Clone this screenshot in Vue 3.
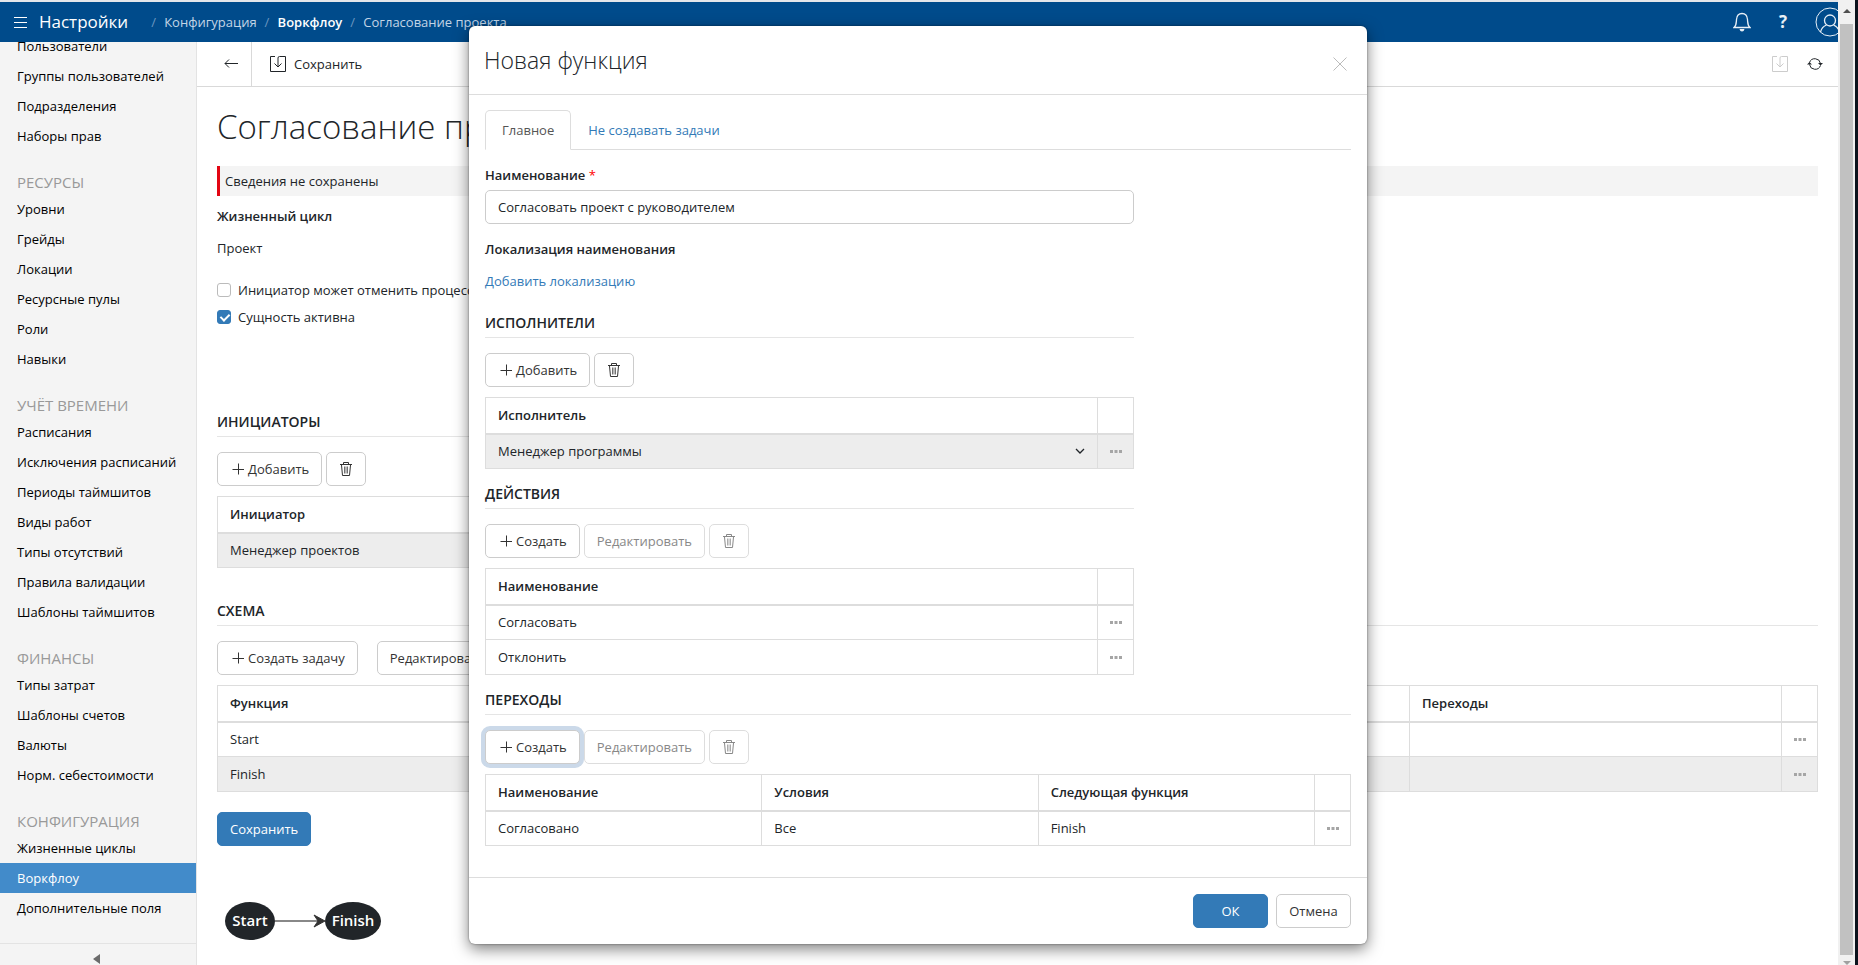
<script setup>
import { ref } from 'vue'

const groups = [
  { title: '', items: ['Пользователи', 'Группы пользователей', 'Подразделения', 'Наборы прав'] },
  { title: 'РЕСУРСЫ', items: ['Уровни', 'Грейды', 'Локации', 'Ресурсные пулы', 'Роли', 'Навыки'] },
  { title: 'УЧЁТ ВРЕМЕНИ', items: ['Расписания', 'Исключения расписаний', 'Периоды таймшитов', 'Виды работ', 'Типы отсутствий', 'Правила валидации', 'Шаблоны таймшитов'] },
  { title: 'ФИНАНСЫ', items: ['Типы затрат', 'Шаблоны счетов', 'Валюты', 'Норм. себестоимости'] },
  { title: 'КОНФИГУРАЦИЯ', items: ['Жизненные циклы', 'Воркфлоу', 'Дополнительные поля'] },
]
const active = 'Воркфлоу'
const name = ref('Согласовать проект с руководителем')
const canCancel = ref(false)
const isActive = ref(true)
const performer = ref('Менеджер программы')
const actions = ['Согласовать', 'Отклонить']
</script>

<template>
  <div class="screen">
    <svg class="defs" aria-hidden="true">
      <symbol id="i-plus" viewBox="0 0 12 12"><path d="M6.500 0.500V11.500M0.500 6.500H12" fill="none" stroke="currentColor" /></symbol>
      <symbol id="i-trash" viewBox="0 0 14 16">
        <path d="M1 3.500H13M4.500 3V1.500H9.500V3M2.500 4L3.500 14.500H10.500L11.500 4" fill="none" stroke="currentColor" />
        <path d="M5.500 5.500V12.500M7 5.500V12.500M8.500 5.500V12.500" fill="none" stroke="currentColor" stroke-width="0.700" />
      </symbol>
      <symbol id="i-save" viewBox="0 0 16 16">
        <path d="M5 0.500H0.500V15.500H15.500V0.500H9.500Q8 0.500 8 2V11M4.500 7.500L8 11L11.500 7.500" fill="none" stroke="currentColor" />
      </symbol>
      <symbol id="i-dots" viewBox="0 0 12 3"><path d="M0 0h3v3H0zM4.500 0h3v3h-3zM9 0h3v3H9z" fill="currentColor" /></symbol>
    </svg>

    <div class="app">
      <header class="topbar">
        <button class="icon-btn burger" aria-label="Меню">
          <svg width="13" height="11" viewBox="0 0 13 11"><path d="M0 0.500H13M0 5.500H13M0 10.500H13" stroke="currentColor" /></svg>
        </button>
        <span class="brand">Настройки</span>
        <nav class="crumbs">
          <i>/</i><a href="#">Конфигурация</a><i>/</i><a href="#" class="strong">Воркфлоу</a><i>/</i><a href="#">Согласование проекта</a>
        </nav>
        <div class="top-actions">
          <button class="icon-btn" aria-label="Уведомления">
            <svg width="18" height="20" viewBox="0 0 18 20">
              <path d="M1 15.500H17C14.500 13.500 14.800 11.500 14.500 7.500C14.200 3.500 12 1.500 9 1.500S3.800 3.500 3.500 7.500C3.200 11.500 3.500 13.500 1 15.500Z" fill="none" stroke="currentColor" stroke-width="1.300" />
              <path d="M6.500 17H11.500Q11 19.500 9 19.500T6.500 17Z" fill="currentColor" />
            </svg>
          </button>
          <button class="icon-btn help" aria-label="Справка">?</button>
          <button class="icon-btn user" aria-label="Профиль">
            <svg width="30" height="30" viewBox="0 0 30 30" fill="none" stroke="currentColor">
              <circle cx="15" cy="15" r="14" stroke-width="1" />
              <circle cx="15" cy="13.500" r="5.500" stroke-width="1.300" />
              <path d="M5.500 25C6.500 21 9 19 11.500 18M24.500 25C23.500 21 21 19 18.500 18" stroke-width="1.300" />
            </svg>
          </button>
        </div>
      </header>

      <div class="body">
        <aside class="sidebar">
          <nav class="menu">
            <div v-for="(g, gi) in groups" :key="gi" class="group">
              <h6 v-if="g.title">{{ g.title }}</h6>
              <a v-for="it in g.items" :key="it" href="#" :class="{ active: it === active }">{{ it }}</a>
            </div>
          </nav>
          <button class="collapse" aria-label="Свернуть меню">
            <svg width="7" height="10" viewBox="0 0 7 10"><path d="M7 0V10L0 5Z" fill="currentColor" /></svg>
          </button>
        </aside>

        <main class="main">
          <div class="toolbar">
            <button class="icon-btn back" aria-label="Назад">
              <svg width="14" height="10" viewBox="0 0 14 10"><path d="M14 4.500H1M5 0.500L1 4.500L5 8.500" fill="none" stroke="currentColor" /></svg>
            </button>
            <button class="icon-btn save"><svg width="16" height="16"><use href="#i-save" /></svg>Сохранить</button>
            <div class="tool-right">
              <button class="icon-btn" disabled aria-label="Сохранить"><svg width="16" height="16"><use href="#i-save" /></svg></button>
              <button class="icon-btn" aria-label="Обновить">
                <svg width="16" height="14" viewBox="0 0 16 14">
                  <path d="M2.500 5.500A5.700 5.700 0 0 1 13.500 6.500M13.500 8.500A5.700 5.700 0 0 1 2.500 7.500" fill="none" stroke="currentColor" />
                  <path d="M0 7.500L2.500 5L5 7.500ZM11 6L13.500 8.500L16 6Z" fill="currentColor" />
                </svg>
              </button>
            </div>
          </div>

          <div class="content">
            <h1>Согласование проекта</h1>
            <div class="notice">Сведения не сохранены</div>
            <div class="label">Жизненный цикл</div>
            <div class="value">Проект</div>
            <div class="checks">
              <label><input v-model="canCancel" type="checkbox" />Инициатор может отменить процесс</label>
              <label><input v-model="isActive" type="checkbox" />Сущность активна</label>
            </div>

            <section class="initiators">
              <h2>ИНИЦИАТОРЫ</h2>
              <div class="buttons">
                <button class="btn"><svg class="plus"><use href="#i-plus" /></svg>Добавить</button>
                <button class="btn square" aria-label="Удалить"><svg class="trash"><use href="#i-trash" /></svg></button>
              </div>
              <table>
                <thead><tr><th>Инициатор</th><th class="menu-col"></th></tr></thead>
                <tbody><tr class="sel"><td>Менеджер проектов</td><td class="menu-col"><button class="icon-btn dots" aria-label="Действия"><svg><use href="#i-dots" /></svg></button></td></tr></tbody>
              </table>
            </section>

            <section class="schema">
              <h2>СХЕМА</h2>
              <div class="buttons wide">
                <button class="btn"><svg class="plus"><use href="#i-plus" /></svg>Создать задачу</button>
                <button class="btn">Редактировать</button>
              </div>
              <table>
                <colgroup><col class="c-rest" /><col class="c-next" /><col class="c-menu" /></colgroup>
                <thead><tr><th>Функция</th><th>Переходы</th><th class="menu-col"></th></tr></thead>
                <tbody>
                  <tr v-for="f in ['Start', 'Finish']" :key="f" :class="{ sel: f === 'Finish' }">
                    <td>{{ f }}</td><td></td>
                    <td class="menu-col"><button class="icon-btn dots" aria-label="Действия"><svg><use href="#i-dots" /></svg></button></td>
                  </tr>
                </tbody>
              </table>
            </section>
            <button class="btn primary submit">Сохранить</button>
            <svg class="graph" width="170" height="40" viewBox="0 0 170 40">
              <path d="M58 20H104" stroke="#888" stroke-width="2" />
              <path d="M97 14L108 20L97 26L101 20Z" fill="#333" stroke="#333" />
              <ellipse cx="33" cy="20" rx="25" ry="19" fill="#212529" />
              <ellipse cx="136" cy="20" rx="28" ry="19" fill="#212529" />
              <text x="33" y="25" text-anchor="middle">Start</text>
              <text x="136" y="25" text-anchor="middle">Finish</text>
            </svg>
          </div>
        </main>
      </div>

      <div class="modal" role="dialog" aria-label="Новая функция">
        <div class="modal-head">
          <h3>Новая функция</h3>
          <button class="icon-btn close" aria-label="Закрыть">
            <svg width="14" height="14" viewBox="0 0 14 14"><path d="M0.500 0.500L13.500 13.500M13.500 0.500L0.500 13.500" stroke="currentColor" /></svg>
          </button>
        </div>
        <div class="modal-body">
          <div class="tabs">
            <button class="tab on">Главное</button>
            <button class="tab">Не создавать задачи</button>
          </div>
          <div class="narrow">
            <label class="label" for="fn-name">Наименование <b>*</b></label>
            <input id="fn-name" v-model="name" class="field" type="text" />
            <div class="label loc">Локализация наименования</div>
            <a class="loc-link" href="#">Добавить локализацию</a>

            <section>
              <h2>ИСПОЛНИТЕЛИ</h2>
              <div class="buttons">
                <button class="btn"><svg class="plus"><use href="#i-plus" /></svg>Добавить</button>
                <button class="btn square" aria-label="Удалить"><svg class="trash"><use href="#i-trash" /></svg></button>
              </div>
              <table>
                <thead><tr><th>Исполнитель</th><th class="menu-col"></th></tr></thead>
                <tbody>
                  <tr class="sel">
                    <td>
                      <div class="pick">
                        <select v-model="performer" aria-label="Исполнитель"><option>Менеджер программы</option></select>
                        <svg width="10" height="6" viewBox="0 0 10 6"><path d="M1 1L5 5L9 1" fill="none" stroke="currentColor" stroke-width="1.300" /></svg>
                      </div>
                    </td>
                    <td class="menu-col"><button class="icon-btn dots" aria-label="Действия"><svg><use href="#i-dots" /></svg></button></td>
                  </tr>
                </tbody>
              </table>
            </section>

            <section>
              <h2>ДЕЙСТВИЯ</h2>
              <div class="buttons">
                <button class="btn"><svg class="plus"><use href="#i-plus" /></svg>Создать</button>
                <button class="btn" disabled>Редактировать</button>
                <button class="btn square" disabled aria-label="Удалить"><svg class="trash"><use href="#i-trash" /></svg></button>
              </div>
              <table>
                <thead><tr><th>Наименование</th><th class="menu-col"></th></tr></thead>
                <tbody>
                  <tr v-for="a in actions" :key="a">
                    <td>{{ a }}</td>
                    <td class="menu-col"><button class="icon-btn dots" aria-label="Действия"><svg><use href="#i-dots" /></svg></button></td>
                  </tr>
                </tbody>
              </table>
            </section>
          </div>

          <section>
            <h2>ПЕРЕХОДЫ</h2>
            <div class="buttons">
              <button class="btn focused"><svg class="plus"><use href="#i-plus" /></svg>Создать</button>
              <button class="btn" disabled>Редактировать</button>
              <button class="btn square" disabled aria-label="Удалить"><svg class="trash"><use href="#i-trash" /></svg></button>
            </div>
            <table>
              <thead><tr><th>Наименование</th><th>Условия</th><th>Следующая функция</th><th class="menu-col"></th></tr></thead>
              <tbody>
                <tr>
                  <td>Согласовано</td><td>Все</td><td>Finish</td>
                  <td class="menu-col"><button class="icon-btn dots" aria-label="Действия"><svg><use href="#i-dots" /></svg></button></td>
                </tr>
              </tbody>
            </table>
          </section>
        </div>
        <div class="modal-foot">
          <button class="btn primary">ОК</button>
          <button class="btn">Отмена</button>
        </div>
      </div>
    </div>

    <div class="scrollbar" aria-hidden="true">
      <svg width="8" height="4" viewBox="0 0 8 4"><path d="M0 4L4 0L8 4Z" fill="#505050" /></svg>
      <div class="thumb"></div>
      <svg width="8" height="4" viewBox="0 0 8 4"><path d="M0 0H8L4 4Z" fill="#a0a0a0" /></svg>
    </div>
    <div class="edge" aria-hidden="true"></div>
  </div>
</template>

<style>
html, body { margin: 0; overflow: hidden; }
</style>

<style scoped>
* { box-sizing: border-box; }
.screen {
  display: flex;
  height: 100vh;
  font: 13px/20px "Open Sans", "Noto Sans", sans-serif;
  color: #212529;
  background: #fff;
}
button, input, select { font: inherit; color: inherit; }
a { text-decoration: none; }
h1, h2, h3, h6 { margin: 0; }
svg { display: block; flex: none; }
.defs { position: absolute; width: 0; height: 0; }
.icon-btn {
  display: flex;
  align-items: center;
  justify-content: center;
  padding: 0;
  border: 0;
  background: none;
}

.app { position: relative; flex: 1; display: flex; flex-direction: column; min-width: 0; border-top: 2px solid #e4e6ea; }
.topbar {
  flex: none;
  display: flex;
  align-items: center;
  height: 40px;
  padding-left: 14px;
  overflow: hidden;
  background: #004b8b;
  color: #fff;
}
.burger { margin-right: 12px; }
.brand { font-size: 17px; line-height: 24px; font-weight: 500; }
.crumbs { display: flex; margin-left: 23px; }
.crumbs i { width: 13px; font-style: normal; color: #6b97c0; }
.crumbs a { margin-right: 8px; color: #c3d5e6; white-space: nowrap; }
.crumbs .strong { color: #fff; font-weight: 600; }
.top-actions { display: flex; align-items: center; gap: 28px; margin: 0 -7px 0 auto; color: #e8f0f7; }
.help { font-size: 17px; font-weight: 700; }

.body { flex: 1; display: flex; min-height: 0; }
.sidebar {
  flex: none;
  display: flex;
  flex-direction: column;
  width: 197px;
  border-right: 1px solid #e3e3e3;
  background: #f4f4f4;
}
.menu {
  flex: 1;
  display: flex;
  flex-direction: column;
  justify-content: flex-end;
  min-height: 0;
  padding-bottom: 20px;
  overflow: hidden;
}
.group { flex: none; }
.group h6 { padding: 19px 17px 0; font-size: 15px; line-height: 24px; font-weight: 400; color: #999; }
.group a { display: block; padding: 0 17px; line-height: 30px; color: #000; white-space: nowrap; }
.group a.active { background: #428bca; color: #fff; }
.collapse {
  display: flex;
  justify-content: center;
  height: 22px;
  padding: 10px 4px 0 0;
  border: 0;
  border-top: 1px solid #e3e3e3;
  background: none;
  color: #6b6b6b;
}

.main { flex: 1; min-width: 0; overflow: hidden; }
.toolbar { display: flex; height: 45px; border-bottom: 1px solid #d9d9d9; }
.back { width: 55px; padding-left: 13px; border-right: 1px solid #d9d9d9; }
.save { gap: 8px; margin-left: 18px; }
.tool-right { display: flex; gap: 19px; margin: 0 15px 0 auto; }
.tool-right .icon-btn:disabled { color: #ccc; }

.content { padding: 0 20px; }
h1 { padding: 16px 0 15px; font-size: 33px; line-height: 48px; font-weight: 300; white-space: nowrap; }
.notice { padding: 5px; border-left: 3px solid #e30613; background: #f4f4f4; }
.label { display: block; font-weight: 600; }
.label b { color: #f00; font-weight: 400; }
.content .label { margin-top: 10px; }
.value { margin-top: 12px; }
.checks { display: grid; gap: 7px; margin-top: 22px; }
.checks label { display: flex; align-items: center; gap: 7px; white-space: nowrap; }
.checks input {
  appearance: none;
  width: 14px;
  height: 14px;
  margin: 0;
  border: 1px solid #bbb;
  border-radius: 3px;
  background: #fff;
}
.checks input:checked { border-color: #337ab7; background: #337ab7; }
.checks input:checked::after {
  content: "";
  display: block;
  width: 4px;
  height: 7px;
  margin: 1px 0 0 4px;
  border: solid #fff;
  border-width: 0 2px 2px 0;
  transform: rotate(45deg);
}

section { margin-top: 15px; }
h2 { padding-bottom: 4px; border-bottom: 1px solid #e5e5e5; font-size: 14px; line-height: 20px; font-weight: 600; }
.initiators { width: 50%; margin-top: 85px; }
.schema { margin-top: 33px; }
.buttons { display: flex; gap: 4px; margin: 15px 0 10px; }
.buttons.wide { gap: 19px; }
.btn {
  display: inline-flex;
  align-items: center;
  justify-content: center;
  height: 34px;
  padding: 0 12px;
  border: 1px solid #ccc;
  border-radius: 5px;
  background: #fff;
  color: #333;
  white-space: nowrap;
}
.btn:disabled { border-color: #ddd; color: #888; }
.btn.primary { border-color: #337ab7; background: #337ab7; color: #fff; }
.btn.square { width: 40px; padding: 0; }
.btn.focused { box-shadow: 0 0 0 4px #cbd9e9; }
.plus { width: 12px; height: 12px; margin: 0 4px 0 2px; }
.trash { width: 14px; height: 16px; }
.submit { margin-top: 20px; }
.graph { margin-top: 55px; }
.graph text { font-size: 15px; font-weight: 600; fill: #fff; }

table { width: 100%; table-layout: fixed; border-collapse: collapse; }
th, td { height: 35px; padding: 0 12px; border: 1px solid #ddd; text-align: left; font-weight: 400; }
th { height: 36px; border-bottom-width: 2px; font-weight: 600; }
.sel td { background: #ededed; }
.menu-col { width: 36px; padding: 0; }
.c-next { width: 372px; }
.c-menu { width: 36px; }
.dots { width: 100%; color: #a5a5a5; }
.dots svg { width: 12px; height: 3px; }
.pick { display: flex; align-items: center; justify-content: space-between; }
.pick select { flex: 1; padding: 0; border: 0; appearance: none; background: none; }

.modal {
  position: absolute;
  top: 24px;
  left: 0;
  right: 2px;
  width: 898px;
  margin: 0 auto;
  border-radius: 6px;
  background: #fff;
  box-shadow: 0 5px 15px rgba(0, 0, 0, 0.5), 0 0 2px rgba(0, 0, 0, 0.5);
}
.modal-head { display: flex; justify-content: space-between; height: 69px; padding: 18px 20px 0 15px; border-bottom: 1px solid #ddd; }
h3 { font-size: 23px; line-height: 32px; font-weight: 300; }
.close { height: 40px; color: #bbb; }
.modal-body { padding: 15px 16px 31px; }
.tabs { display: flex; border-bottom: 1px solid #ddd; }
.tab {
  height: 40px;
  margin-bottom: -1px;
  padding: 0 16px;
  border: 1px solid transparent;
  border-radius: 5px 5px 0 0;
  background: none;
  color: #337ab7;
}
.tab.on { border-color: #ddd #ddd #fff; background: #fff; color: #555; }
.narrow { width: 649px; }
.narrow > .label { margin-top: 15px; }
.field { display: block; width: 100%; height: 34px; margin-top: 5px; padding: 0 12px; border: 1px solid #ccc; border-radius: 5px; }
.loc-link { display: block; margin: 12px 0 22px; color: #337ab7; }
.modal-foot { display: flex; justify-content: flex-end; gap: 8px; padding: 16px; border-top: 1px solid #ddd; }
.modal-foot .btn { min-width: 75px; }

.scrollbar {
  flex: none;
  display: flex;
  flex-direction: column;
  align-items: center;
  width: 17px;
  padding: 9px 0 0 2px;
  border-right: 2px solid #f1f1f1;
  background: #f1f1f1;
}
.thumb { flex: 1; width: 13px; margin: 11px 0 6px; background: #c1c1c1; }
.edge { flex: none; width: 3px; background: #0c131d; }
</style>
